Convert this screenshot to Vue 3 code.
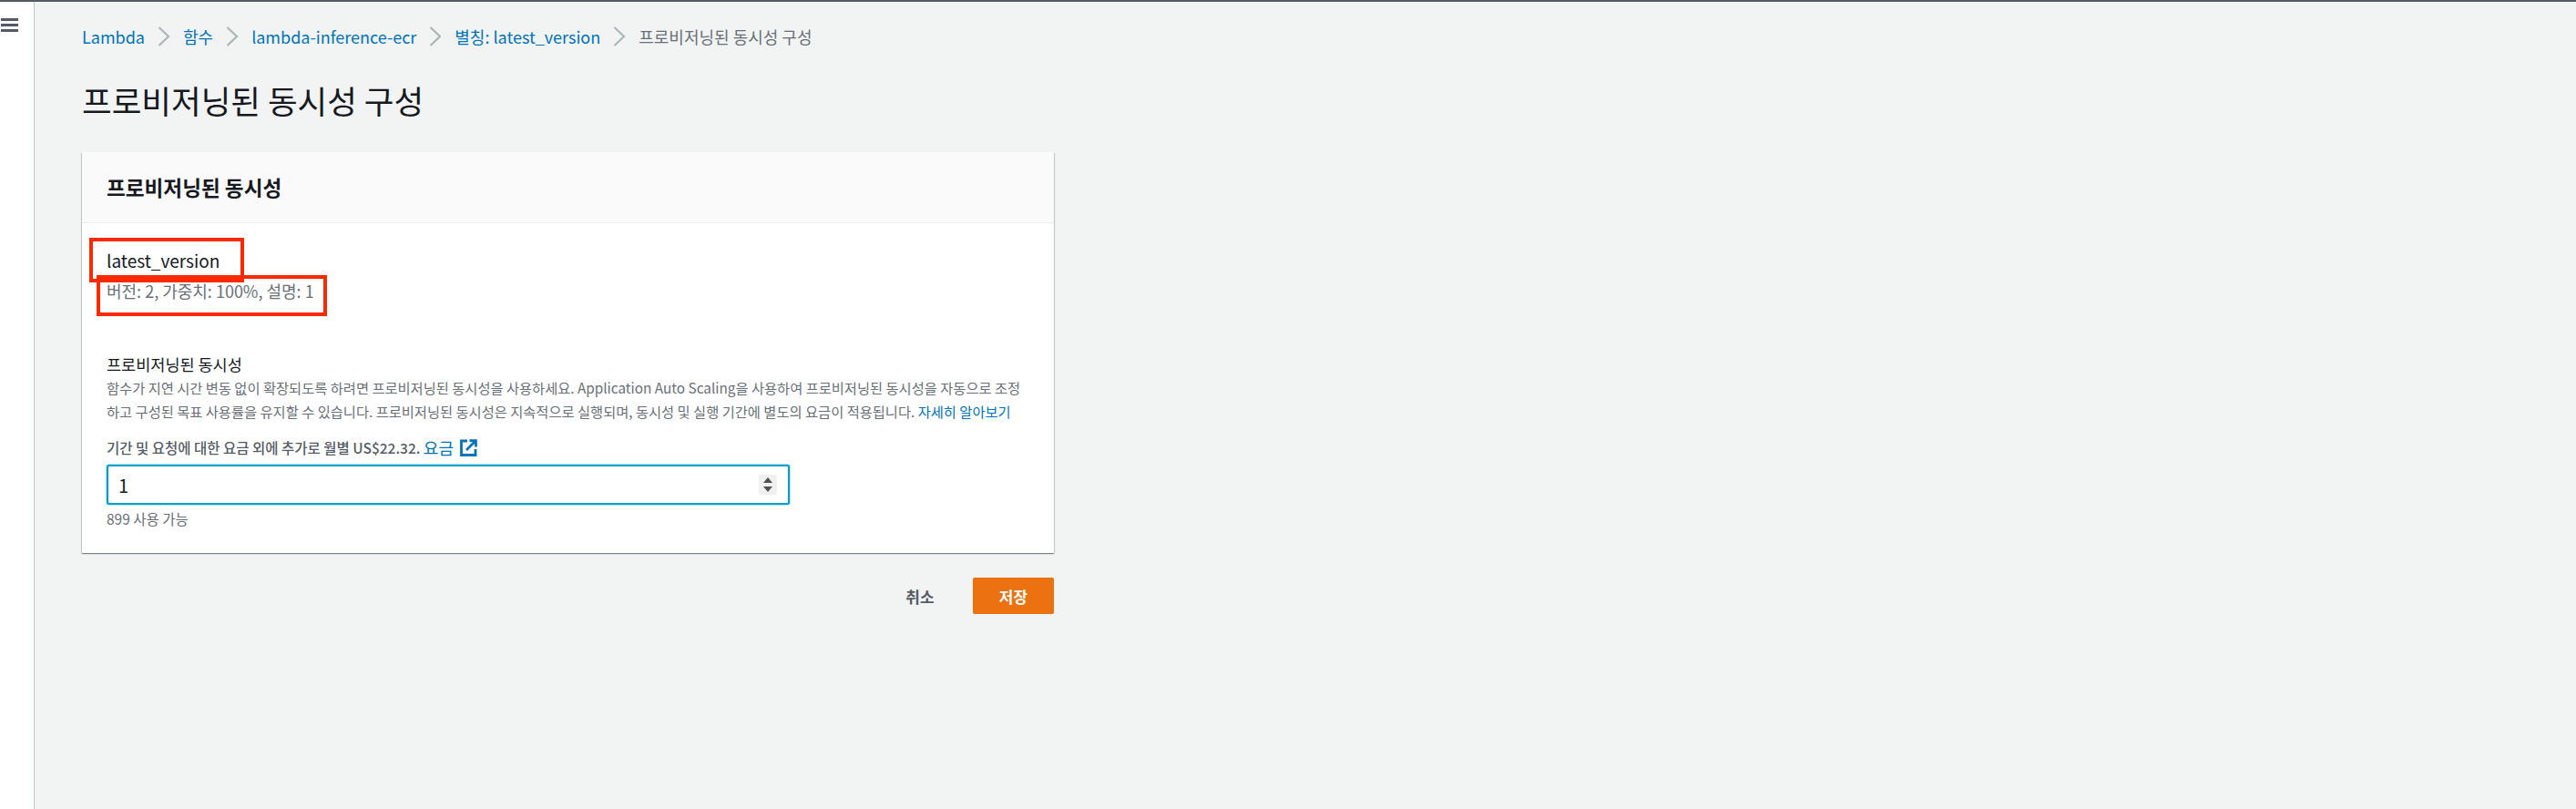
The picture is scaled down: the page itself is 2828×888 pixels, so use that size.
<script setup>
const crumbs = ['Lambda', '함수', 'lambda-inference-ecr', '별칭: latest_version']
</script>

<template>
  <div class="page">
    <aside class="side">
      <div class="burger"><span></span><span></span><span></span></div>
    </aside>
    <main class="main">
      <nav class="crumbs">
        <template v-for="c in crumbs" :key="c">
          <a class="crumb">{{ c }}</a>
          <svg class="chev" width="14" height="24" viewBox="0 0 14 24"><path d="M1.5 2 L12 12 L1.5 22" fill="none" stroke="#aab7b8" stroke-width="2.2" /></svg>
        </template>
        <span class="crumb-last">프로비저닝된 동시성 구성</span>
      </nav>
      <h1 class="title">프로비저닝된 동시성 구성</h1>

      <section class="card">
        <header class="card-head"><h2>프로비저닝된 동시성</h2></header>
        <div class="card-body">
          <div class="alias">latest_version</div>
          <div class="meta">버전: 2, 가중치: 100%, 설명: 1</div>
          <div class="mark mark-a"></div>
          <div class="mark mark-b"></div>

          <div class="label">프로비저닝된 동시성</div>
          <p class="desc">함수가 지연 시간 변동 없이 확장되도록 하려면 프로비저닝된 동시성을 사용하세요. Application Auto Scaling을 사용하여 프로비저닝된 동시성을 자동으로 조정<br />하고 구성된 목표 사용률을 유지할 수 있습니다. 프로비저닝된 동시성은 지속적으로 실행되며, 동시성 및 실행 기간에 별도의 요금이 적용됩니다. <a class="link">자세히 알아보기</a></p>
          <div class="price">기간 및 요청에 대한 요금 외에 추가로 월별 US$22.32. <a class="link normal">요금</a>
            <svg class="ext" width="19" height="19" viewBox="0 0 19 19" fill="none" stroke="#0073bb" stroke-width="2.8"><path d="M8 2 H1.5 V17.5 H17 V11" /><path d="M7 12 L16.5 2.5" stroke-width="2.6" /><path d="M10.5 1.6 H17.4 V8.5" /></svg>
          </div>
          <div class="field">
            <input class="num" type="text" value="1" />
            <div class="spin"><i class="up"></i><i class="down"></i></div>
          </div>
          <div class="hint">899 사용 가능</div>
        </div>
      </section>

      <div class="actions">
        <button class="cancel">취소</button>
        <button class="save">저장</button>
      </div>
    </main>
  </div>
</template>

<style scoped>
.page {
  display: flex;
  height: 888px;
  box-sizing: border-box;
  border-top: 2px solid #545b64;
  background: #f2f3f3;
  font-family: "Noto Sans CJK KR", "Noto Sans", sans-serif;
  color: #16191f;
  overflow: hidden;
}

.side {
  width: 38px;
  flex-shrink: 0;
  box-sizing: border-box;
  background: #fff;
  border-right: 1px solid #c6c9cc;
  padding-top: 18px;
}

.burger {
  display: flex;
  flex-direction: column;
  gap: 3px;
  width: 19px;
  margin-left: 1px;
}

.burger span {
  height: 3px;
  background: #545b64;
}

.main {
  flex: 1;
  padding: 24px 0 0 52px;
}

.crumbs {
  display: flex;
  align-items: center;
  height: 28px;
  font-size: 18px;
}

.crumb {
  color: #0073bb;
}

.crumb-last {
  color: #687078;
}

.chev {
  margin: 0 14px;
}

.title {
  margin: 36px 0 0;
  height: 40px;
  line-height: 40px;
  font-size: 35.5px;
  font-weight: 400;
}

.card {
  width: 1067px;
  margin-top: 37px;
  background: #fff;
  box-shadow: 0 1px 1px 0 rgba(0, 28, 36, 0.3), 1px 1px 1px 0 rgba(0, 28, 36, 0.15), -1px 1px 1px 0 rgba(0, 28, 36, 0.15);
}

.card-head {
  height: 78px;
  box-sizing: border-box;
  display: flex;
  align-items: center;
  padding-left: 27px;
  background: #fafafa;
  border-bottom: 1px solid #eaeded;
}

.card-head h2 {
  margin: 0;
  font-size: 22.6px;
  font-weight: 700;
}

.card-body {
  position: relative;
  padding: 27px 27px 27px;
}

.alias {
  font-size: 19px;
  line-height: 28px;
}

.meta {
  margin-top: 6px;
  font-size: 18px;
  line-height: 26px;
  color: #687078;
}

.mark {
  position: absolute;
  border: 4px solid #fa2a00;
  box-sizing: border-box;
}

.mark-a {
  left: 8px;
  top: 16px;
  width: 170px;
  height: 49px;
}

.mark-b {
  left: 16px;
  top: 57px;
  width: 253px;
  height: 45px;
}

.label {
  margin-top: 55px;
  font-size: 17.5px;
  line-height: 25px;
}

.desc {
  margin: 0;
  font-size: 15.3px;
  line-height: 26px;
  color: #687078;
  white-space: nowrap;
}

.link {
  color: #0073bb;
}

.price {
  display: flex;
  align-items: center;
  margin-top: 14px;
  font-size: 15.5px;
  line-height: 26px;
  font-weight: 500;
  color: #545b64;
  white-space: pre;
}

.normal {
  font-weight: 400;
  font-size: 18px;
}

.ext {
  margin-left: 7px;
}

.field {
  position: relative;
  margin-top: 6px;
  width: 750px;
}

.num {
  display: block;
  width: 100%;
  height: 44px;
  box-sizing: border-box;
  border: 2px solid #00a1c9;
  border-radius: 3px;
  box-shadow: 0 0 2px #00a1c9;
  padding: 0 11px;
  outline: none;
  font: 400 20px "Noto Sans CJK KR", "Noto Sans", sans-serif;
  color: #16191f;
}

.spin {
  position: absolute;
  right: 14px;
  top: 11px;
  width: 20px;
  height: 22px;
  background: #f0f0f0;
  display: flex;
  flex-direction: column;
  align-items: center;
  justify-content: center;
  gap: 4px;
}

.spin i {
  width: 0;
  height: 0;
  border-left: 5px solid transparent;
  border-right: 5px solid transparent;
}

.spin .up {
  border-bottom: 6px solid #505050;
}

.spin .down {
  border-top: 6px solid #505050;
}

.hint {
  margin-top: 4px;
  font-size: 15.5px;
  line-height: 22px;
  color: #687078;
}

.actions {
  width: 1067px;
  margin-top: 27px;
  display: flex;
  justify-content: flex-end;
  align-items: center;
}

.actions button {
  border: none;
  font: 700 17px "Noto Sans CJK KR", "Noto Sans", sans-serif;
  height: 40px;
  padding: 0;
  cursor: pointer;
}

.cancel {
  background: none;
  color: #545b64;
  margin-right: 25px;
  width: 66px;
}

.save {
  width: 89px;
  background: #ec7211;
  color: #fff;
  border-radius: 2px;
}
</style>
